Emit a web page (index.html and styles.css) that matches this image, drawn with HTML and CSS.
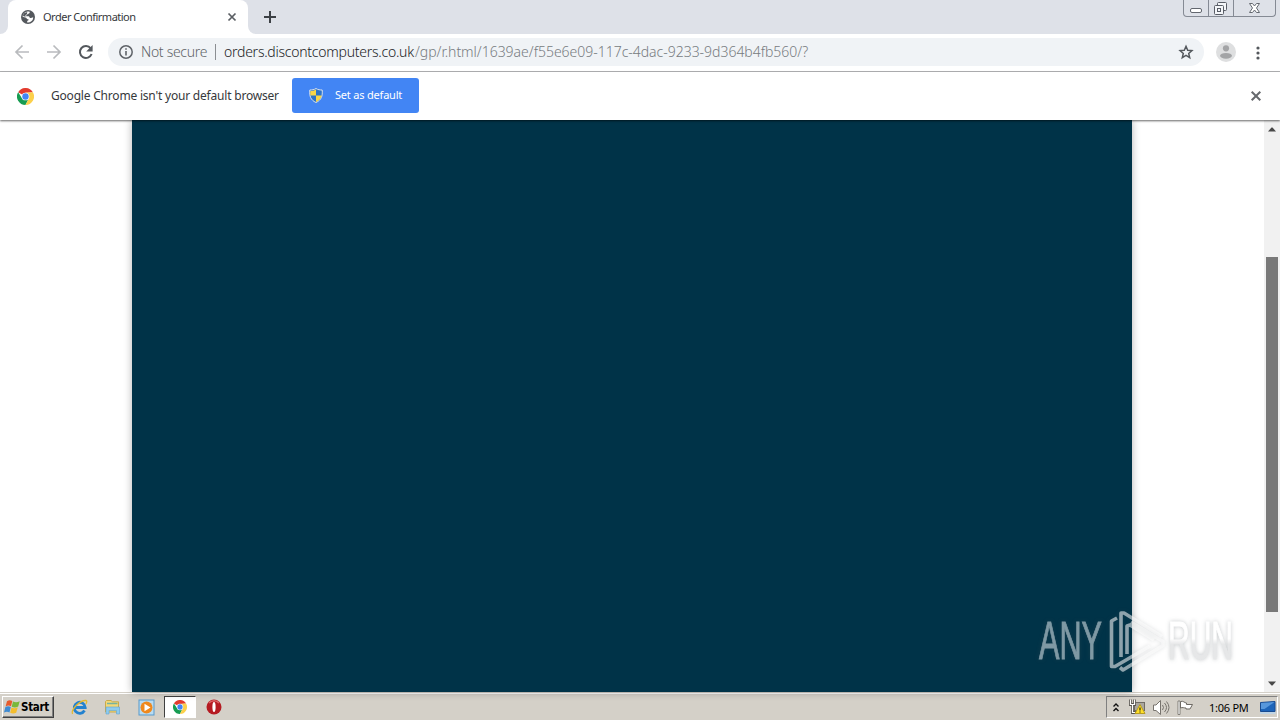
FILE: index.html
```html
<!DOCTYPE html>
<html lang="en">
<head>
    <meta charset="UTF-8">
    <title>Order Confirmation</title>
    <link rel="stylesheet" href="styles.css">
</head>
<body>

<svg class="defs" width="0" height="0">
    <symbol id="chrome" viewBox="0 0 18 18">
        <path d="M9 9 1.2 4.5A9 9 0 0 1 16.8 4.5L9 5z" fill="#e33b2e"/>
        <path d="M1.2 4.5A9 9 0 0 0 9 18L12.5 11 9 9 5.5 11z" fill="#179c52"/>
        <path d="M16.8 4.5A9 9 0 0 1 9 18L12.5 11 9 5z" fill="#fcd04b"/>
        <circle cx="9" cy="9" r="4.1" fill="#fff"/>
        <circle cx="9" cy="9" r="3.4" fill="#4285f4"/>
    </symbol>
</svg>

<div class="tabs">
    <div class="tab-before"></div>
    <div class="tab">
        <svg class="globe" width="14" height="14" viewBox="0 0 14 14">
            <circle cx="7" cy="7" r="7" fill="#54585d"/>
            <path d="M8.600 1.700C9.300 3 7.800 3.600 6.600 4c-.3 1.200-1.600 1-1.500 2.200H7.500c1.200.2.800 1.700 1.900 1.900 1.200 0 1.300-.8 2.900-.7A5.400 5.400 0 0 1 6.200 12.400V10.800c1 0 1.300-.5 1.300-1.500C6 9.300 5.500 8.600 5.200 7.800L1.600 6.800A5.500 5.500 0 0 1 5.600 1.800C6.600 1.500 7.700 1.400 8.600 1.700z" fill="#fff"/>
            <path d="M2.500 3.500L6.200 2 6 4.200 4.500 5v1.800L2 6z" fill="#54585d"/>
        </svg>
        <span class="tab-title">Order Confirmation</span>
        <svg class="tab-close" width="8" height="8" viewBox="0 0 8 8"><path d="M.5.5l7 7M7.500.5l-7 7" stroke="#5a5e63" stroke-width="1.700"/></svg>
    </div>
    <div class="tab-after"></div>
    <svg class="new-tab" width="12" height="12" viewBox="0 0 12 12"><path d="M6 0v12M0 6h12" stroke="#3c4045" stroke-width="2"/></svg>
    <div class="win-btns">
        <div class="win-btn">
            <svg width="24" height="16" viewBox="0 0 24 16"><rect x="6.500" y="8.500" width="11" height="4" rx="1.500" fill="#fff" stroke="#63676f"/></svg>
        </div>
        <div class="win-btn">
            <svg width="24" height="16" viewBox="0 0 24 16" fill="#f4f6f9" stroke="#595d66"><rect x="8.500" y="2.500" width="9" height="8" rx="1"/><rect x="5.500" y="5.500" width="9" height="9" rx="1"/><rect x="8.500" y="8.500" width="3" height="3"/></svg>
        </div>
        <div class="win-btn">
            <svg width="41" height="16" viewBox="0 0 41 16"><path d="M15.500 3.500h3l2 2.500 2-2.500h3l-3 4.500 3 4.500h-3l-2-2.500-2 2.500h-3l3-4.500z" fill="#fff" stroke="#656971"/></svg>
        </div>
    </div>
</div>

<div class="toolbar">
    <svg class="nav" width="96" height="16" viewBox="0 0 96 16" fill="none" stroke-width="1.700">
        <path d="M15 8H2M8.500 1.500L2 8l6.500 6.500" stroke="#b9bbbe"/>
        <path d="M33 8h13M39.500 1.500L46 8l-6.500 6.500" stroke="#b9bbbe"/>
        <path d="M76.700 4.300A6 6 0 1 0 77.600 10" stroke="#54585d" stroke-width="2"/>
        <path d="M78.600 1v6.400H72.200z" fill="#54585d"/>
    </svg>
    <div class="omnibox">
        <svg class="info" width="14" height="14" viewBox="0 0 14 14"><circle cx="7" cy="7" r="6.200" fill="none" stroke="#5f6368" stroke-width="1.500"/><path d="M7 3.200v1.500M7 6v4.600" stroke="#5f6368" stroke-width="1.600"/></svg>
        <span class="secure">Not secure</span>
        <span class="sep"></span>
        <span class="host">orders.discontcomputers.co.uk</span><span class="path">/gp/r.html/1639ae/f55e6e09-117c-4dac-9233-9d364b4fb560/?</span>
        <svg class="star" width="16" height="16" viewBox="0 0 16 16"><path d="M8 2.300l1.700 3.900 4.200.4-3.200 2.800 1 4.200L8 11.400l-3.700 2.200 1-4.200-3.200-2.800 4.200-.4z" fill="none" stroke="#54585d" stroke-width="1.500"/></svg>
    </div>
    <svg class="avatar" width="20" height="20" viewBox="0 0 20 20"><circle cx="10" cy="10" r="10" fill="#dedfe0"/><circle cx="10" cy="6.300" r="3.100" fill="#a3a4a6"/><ellipse cx="10" cy="13.800" rx="6" ry="2.900" fill="#a3a4a6"/></svg>
    <svg class="dots" width="4" height="14" viewBox="0 0 4 14" fill="#54585d"><circle cx="2" cy="2" r="1.600"/><circle cx="2" cy="7" r="1.600"/><circle cx="2" cy="12" r="1.600"/></svg>
</div>

<div class="infobar">
    <svg class="logo" width="17" height="17"><use href="#chrome"/></svg>
    <span class="message">Google Chrome isn't your default browser</span>
    <div class="set-default">
        <svg width="14" height="15" viewBox="0 0 14 15">
            <path d="M7 .5C5 1.800 3 2 .8 2 .3 8 1.500 12 7 14.500 12.500 12 13.700 8 13.200 2 11 2 9 1.800 7 .5z" fill="#2b74c9" stroke="#dbe2ec"/>
            <path d="M7 1.500V7.500H1.400C1.100 6 1.200 4.500 1.400 3 3.500 3 5 2.700 7 1.500zM7 7.500h5.700C12 10.500 10.500 12.500 7 14z" fill="#f8d648"/>
        </svg>
        <span>Set as default</span>
    </div>
    <svg class="info-close" width="10" height="10" viewBox="0 0 10 10"><path d="M.7.7l8.600 8.600M9.300.7L.7 9.300" stroke="#66696d" stroke-width="2"/></svg>
</div>

<div class="view">
    <div class="page"></div>
    <div class="scrollbar">
        <svg width="8" height="5" viewBox="0 0 8 5"><path d="M0 4.500L3.500.5h1L8 4.500z" fill="#484848"/></svg>
        <div class="thumb"></div>
        <svg width="8" height="5" viewBox="0 0 8 5"><path d="M0 .5h8L4.500 4.500h-1z" fill="#484848"/></svg>
    </div>
    <svg class="watermark" width="216" height="70" viewBox="0 0 216 70">
        <defs>
            <linearGradient id="fade" gradientUnits="userSpaceOnUse" x1="0" y1="16" x2="0" y2="53">
                <stop offset=".45" stop-color="#fff"/>
                <stop offset=".6" stop-color="#e6e7e8"/>
            </linearGradient>
        </defs>
        <text class="any" x="5" y="53" textLength="63" lengthAdjust="spacingAndGlyphs">ANY</text>
        <text class="run" x="134" y="53" textLength="65" lengthAdjust="spacingAndGlyphs">RUN</text>
        <!-- one path, so the opacity does not add up where the strokes meet -->
        <path class="mark-lines" d="M83 12l-5.500 3v45.500H81L116 40M87 51V7h3l38 23.500M93 48V20l3-1 24 15M86 61.500l3 2.500L129 39.500v-4L97 16"/>
    </svg>
</div>

<div class="taskbar">
    <div class="start">
        <svg width="17" height="16" viewBox="0 0 17 16">
            <path d="M3 2.200C5 .8 6.500 1 8.300 2L7 7.300C5 6.200 3.500 6.500 1.600 7.400z" fill="#e65b2c"/>
            <path d="M9 2.500c2 1 4.300 1 6.700-.2L14.200 7.600c-2.400 1.200-4.400 1-6.500.1z" fill="#79b83a"/>
            <path d="M1.400 8C3.300 7 5 7 6.800 8L5.500 13.500C3.800 12.500 2 12.500 0 13.500z" fill="#3f8bd2"/>
            <path d="M7.500 8.400c2 1 4 1 6.300-.1l-1.600 5.500c-2.200 1.100-4 1-6 0z" fill="#f4bd2d"/>
        </svg>
        <span>Start</span>
    </div>
    <div class="quick">
        <svg width="17" height="17" viewBox="0 0 17 17">
            <path d="M13.500 11.500A5.500 5.500 0 1 1 14.200 8.500H4.500" fill="none" stroke="#2382cf" stroke-width="2.800"/>
            <path d="M1.500 15C-.5 11 9 1 15 1.500c1.200.3.900 2-.2 3.500" fill="none" stroke="#e4b92f" stroke-width="1.300"/>
        </svg>
    </div>
    <div class="quick">
        <svg width="17" height="16" viewBox="0 0 17 16">
            <path d="M1.500 13V2.500l1-1H7l1.500 1.300h6V13z" fill="#f3d878" stroke="#c9aa4c"/>
            <path d="M3 4.500h10.500" stroke="#75b3a0" stroke-width="1.500"/>
            <path d="M2 8h13.500v7h-3v-3.500H5V15H2z" fill="#8fcbed" stroke="#5ea5d3" stroke-width=".6"/>
        </svg>
    </div>
    <div class="quick">
        <svg width="17" height="17" viewBox="0 0 17 17">
            <rect x="1" y="1" width="15" height="15" fill="#b9dcf2" stroke="#5799cb"/>
            <circle cx="8.500" cy="8.500" r="6" fill="#ef891e"/>
            <path d="M6.500 4.800l6 3.700-6 3.700z" fill="#fff"/>
        </svg>
    </div>
    <div class="quick active">
        <svg width="14" height="14"><use href="#chrome"/></svg>
    </div>
    <div class="quick">
        <svg width="16" height="16" viewBox="0 0 16 16"><circle cx="8" cy="8" r="7.500" fill="#b51b22"/><path d="M3 4a6.500 6.500 0 0 1 10 0" fill="none" stroke="#dc6265" stroke-width="1.500"/><ellipse cx="8" cy="8" rx="1.600" ry="5" fill="#fff"/></svg>
    </div>
    <div class="tray">
        <svg class="chevrons" width="6" height="9" viewBox="0 0 6 9"><path d="M.5 3.500L3 1l2.500 2.500M.5 8L3 5.500 5.500 8" fill="none" stroke="#111" stroke-width="1.400"/></svg>
        <svg class="network" width="17" height="16" viewBox="0 0 17 16">
            <rect x="5.500" y="3.500" width="10" height="8" fill="#aaa69e" stroke="#6f6b65"/>
            <path d="M1.500.5v5h4v-5M3.500 5.500v8h5" fill="none" stroke="#55524d" stroke-width="2.800"/>
            <path d="M1.500.5v5h4v-5M3.500 5.500v8h5" fill="none" stroke="#fff" stroke-width="1.200"/>
            <path d="M11 5.500l5 9H6z" fill="#ffdf27" stroke="#b79b20"/>
            <path d="M11 8.500v3M11 12.500v1" stroke="#222" stroke-width="1.200"/>
        </svg>
        <svg class="sound" width="17" height="15" viewBox="0 0 17 15" fill="none" stroke="#77736d">
            <path d="M.5 5H3l4.500-4.500v14L3 10.500H.5z" fill="#fff"/>
            <path d="M9.500 5q2 2.500 0 5M11.500 3q4 4.500 0 9M13.500 1.500q5 6 0 12"/>
        </svg>
        <svg class="flag" width="17" height="15" viewBox="0 0 17 15"><path d="M1 1h2v13.500H1z" fill="#fff" stroke="#6d6963" stroke-width=".8"/><path d="M3.500 1.500c3-1 4 1.500 6 1.500v1.500h6l-2.500 4.500H9V8c-2 0-3.500-1-5.500 0z" fill="#fff" stroke="#6d6963"/></svg>
        <span class="clock">1:06 PM</span>
        <svg class="desktop" width="16" height="13" viewBox="0 0 16 13"><path d="M.5 1.500L15 .5v10H.5z" fill="#1d64b9" stroke="#184b91"/><path d="M1 2l13.500-1-10 7H1z" fill="#5797dc"/><path d="M0 12h15.500" stroke="#bad6ee" stroke-width="1.500"/></svg>
    </div>
</div>

</body>
</html>
```

FILE: styles.css
```css
html,body{
    height: 100%;
}

body{
    margin: 0;
    display: flex;
    flex-direction: column;
    overflow: hidden;
    background: #fff;
    font-family: "Noto Sans", "DejaVu Sans", sans-serif;
    color: #36383b;
}

*{
    box-sizing: border-box;
}

svg{
    display: block;
    flex: none;
    overflow: visible;
}

span{
    white-space: nowrap;
}

.defs{
    position: absolute;
}

/* tab strip */
.tabs{
    height: 34px;
    flex: none;
    display: flex;
    background: #dee1e8;
}

.tab-before,
.tab-after{
    width: 8px;
    background: #fff;
}

.tab-before::before,
.tab-after::before{
    content: "";
    display: block;
    height: 34px;
    background: #dee1e8;
}

.tab-before::before{
    border-bottom-right-radius: 8px;
}

.tab-after::before{
    border-bottom-left-radius: 8px;
}

.tab{
    width: 240px;
    display: flex;
    align-items: center;
    padding: 0 12px 0 13px;
    background: #fff;
    border-radius: 8px 8px 0 0;
}

.tab-title{
    margin-left: 8px;
    padding-bottom: 2px;
    font-size: 11px;
    letter-spacing: -0.5px;
}

.tab-close{
    margin-left: auto;
}

.new-tab{
    margin: 11px 0 0 8px;
}

.win-btns{
    display: flex;
    height: 17px;
    margin-left: auto;
    margin-right: 4px;
    border: 1px solid #858a94;
    border-top: 0;
    border-radius: 0 0 4px 4px;
}

.win-btn + .win-btn{
    border-left: 1px solid #858a94;
}

/* address bar */
.toolbar{
    height: 38px;
    flex: none;
    display: flex;
    align-items: center;
    padding: 0 20px 0 14px;
    border-bottom: 1px solid #b2b3b5;
}

.nav{
    margin-top: -1px;
}

.omnibox{
    width: 1096px;
    height: 28px;
    margin-top: -1px;
    margin-left: -2px;
    display: flex;
    align-items: center;
    padding: 0 10px 0 11px;
    border-radius: 14px;
    background: #f0f3f6;
    font-size: 14px;
    font-weight: 300;
}

.secure,
.host,
.path{
    padding-bottom: 2px;
}

.secure{
    width: 67px;
    margin-left: 8px;
    color: #5f6368;
    letter-spacing: -0.3px;
}

.sep{
    width: 1px;
    height: 16px;
    margin: 0 8px 0 7px;
    background: #8b8e92;
}

.host{
    width: 191px;
    color: #202124;
    letter-spacing: -0.25px;
}

.path{
    color: #777b80;
    letter-spacing: -0.02px;
}

.star{
    margin-left: auto;
}

.avatar{
    margin: -1px 0 0 12px;
}

.dots{
    margin-left: auto;
}

/* default browser prompt */
.infobar{
    height: 48px;
    flex: none;
    display: flex;
    align-items: center;
    padding: 0 19px 0 17px;
    position: relative;
    z-index: 1;
    background: #fff;
    box-shadow: 0 1px 2px rgba(0,0,0,0.6);
    font-size: 12px;
}

.message{
    width: 229px;
    margin-left: 17px;
    padding-bottom: 2px;
    letter-spacing: -0.2px;
}

.set-default{
    width: 127px;
    height: 35px;
    margin: -1px 0 0 12px;
    padding-left: 17px;
    display: flex;
    align-items: center;
    gap: 12px;
    border-radius: 3px;
    background: #4285f4;
    color: #fff;
    font-size: 11px;
    letter-spacing: -0.2px;
}

.set-default span{
    padding-bottom: 2px;
}

.info-close{
    margin-left: auto;
}

/* page */
.view{
    flex: 1;
    display: flex;
    justify-content: space-between;
    position: relative;
    padding-left: 132px;
}

.page{
    width: 1000px;
    background: #003348;
    box-shadow: 0 0 8px rgba(0,0,0,0.3);
}

.scrollbar{
    width: 16px;
    display: flex;
    flex-direction: column;
    align-items: center;
    padding: 7px 0 6px;
    background: #f1f1f1;
}

.thumb{
    width: 12px;
    height: 355px;
    margin: 125px 0 auto;
    background: #797979;
}

.watermark{
    position: absolute;
    right: 30px;
    bottom: 16px;
    filter: drop-shadow(0 0 2px rgba(70,80,85,0.3));
}

.any,
.run{
    font: 53px "Liberation Sans Narrow", "Liberation Sans", sans-serif;
    stroke-width: 1;
}

.any{
    fill: #7f99a4;
    stroke: #7f99a4;
}

.run{
    fill: url(#fade);
    stroke: url(#fade);
}

.mark-lines{
    fill: none;
    stroke: #fff;
    stroke-width: 3.6;
    stroke-linejoin: round;
    opacity: 0.55;
}

/* taskbar */
.taskbar{
    height: 28px;
    flex: none;
    display: flex;
    align-items: center;
    padding: 1px 2px 0;
    background: #d4d0c8;
    border-top: 1px solid #d4d0c8;
    box-shadow: inset 0 1px 0 #fff;
}

.start{
    width: 52px;
    height: 22px;
    margin-right: 9px;
    display: flex;
    align-items: center;
    padding-left: 1px;
    border: 1px solid;
    border-color: #fff #404040 #404040 #fff;
    box-shadow: inset -1px -1px 0 #808080;
    color: #000;
    font: bold 11.5px "DejaVu Sans Condensed", "DejaVu Sans", sans-serif;
    letter-spacing: -0.3px;
}

.quick{
    width: 32px;
    height: 22px;
    margin-right: 1.7px;
    display: flex;
    align-items: center;
    justify-content: center;
}

.active{
    background: #fff;
    border: 1px solid;
    border-color: #404040 #fff #fff #404040;
}

.tray{
    width: 172px;
    height: 22px;
    margin-left: auto;
    display: flex;
    align-items: center;
    padding-left: 6px;
    border: 1px solid;
    border-color: #808080 #fff #fff #808080;
    color: #000;
    font-size: 11px;
}

.network{
    margin-left: 10px;
}

.sound{
    margin-left: 7px;
}

.flag{
    margin-left: 7px;
}

.clock{
    width: 40px;
    margin-left: 15px;
    letter-spacing: -0.25px;
}

.desktop{
    margin-left: 11px;
}
```
